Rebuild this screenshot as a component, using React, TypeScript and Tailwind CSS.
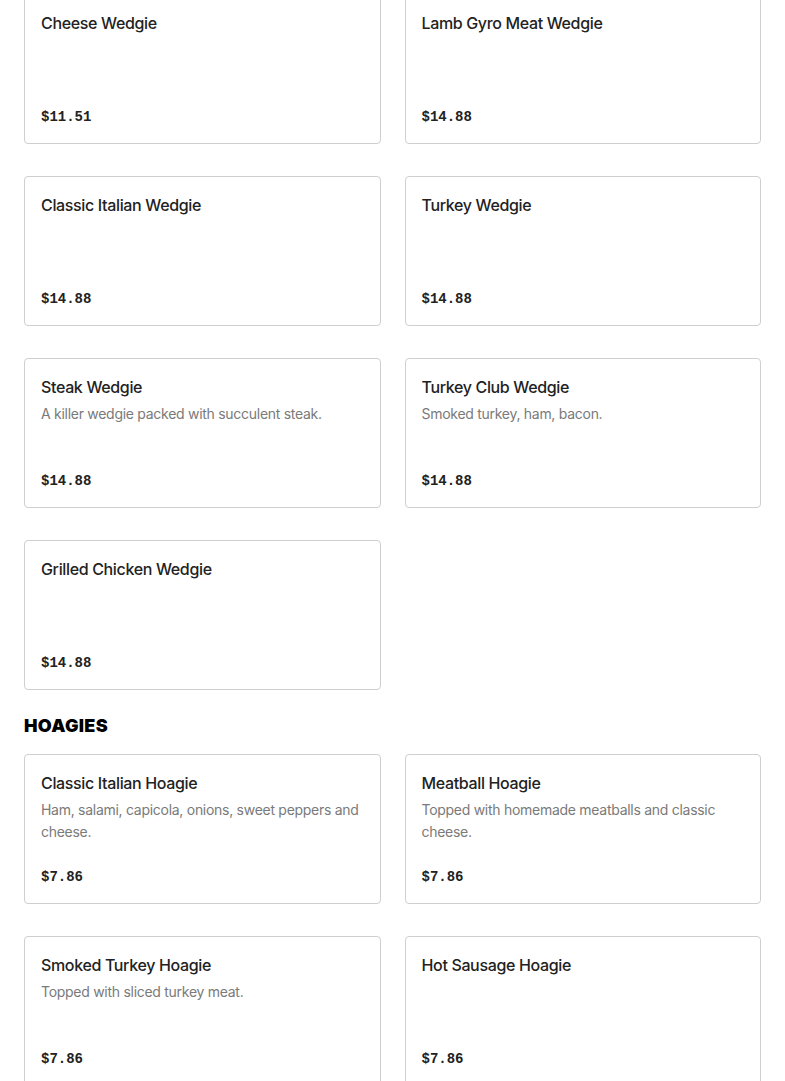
import React from 'react';

type Item = { name: string; desc?: string; price: string };

const wedgies: Item[] = [
  { name: 'Cheese Wedgie', price: '$11.51' },
  { name: 'Lamb Gyro Meat Wedgie', price: '$14.88' },
  { name: 'Classic Italian Wedgie', price: '$14.88' },
  { name: 'Turkey Wedgie', price: '$14.88' },
  { name: 'Steak Wedgie', desc: 'A killer wedgie packed with succulent steak.', price: '$14.88' },
  { name: 'Turkey Club Wedgie', desc: 'Smoked turkey, ham, bacon.', price: '$14.88' },
  { name: 'Grilled Chicken Wedgie', price: '$14.88' },
];

const hoagies: Item[] = [
  { name: 'Classic Italian Hoagie', desc: 'Ham, salami, capicola, onions, sweet peppers and cheese.', price: '$7.86' },
  { name: 'Meatball Hoagie', desc: 'Topped with homemade meatballs and classic cheese.', price: '$7.86' },
  { name: 'Smoked Turkey Hoagie', desc: 'Topped with sliced turkey meat.', price: '$7.86' },
  { name: 'Hot Sausage Hoagie', price: '$7.86' },
];

const MenuCard: React.FC<{ item: Item }> = ({ item }) => (
  <div className="flex h-[150px] flex-col rounded-[4px] border border-[#cfcfcf] bg-white p-4">
    <h3 className="text-[16px] leading-6 font-medium tracking-[-0.35px] text-[#222]">{item.name}</h3>
    {item.desc && (
      <p className="mt-1 text-[14px] leading-[22px] tracking-[-0.28px] text-[#7a7a7a]">{item.desc}</p>
    )}
    <div className="mt-auto font-['Liberation_Mono',monospace] text-[14px] leading-5 font-bold text-[#222]">
      {item.price}
    </div>
  </div>
);

export default function App() {
  return (
    <div className="min-h-screen overflow-hidden bg-white px-6 font-['Inter',sans-serif]">
      <div className="-mt-[6px] grid grid-cols-2 gap-x-6 gap-y-8">
        {wedgies.map((item) => (
          <MenuCard key={item.name} item={item} />
        ))}
      </div>

      <h2 className="mt-[24px] mb-[16px] text-[18px] leading-6 font-black tracking-[0.3px] text-black uppercase">
        Hoagies
      </h2>

      <div className="grid grid-cols-2 gap-x-6 gap-y-8">
        {hoagies.map((item) => (
          <MenuCard key={item.name} item={item} />
        ))}
      </div>
    </div>
  );
}
